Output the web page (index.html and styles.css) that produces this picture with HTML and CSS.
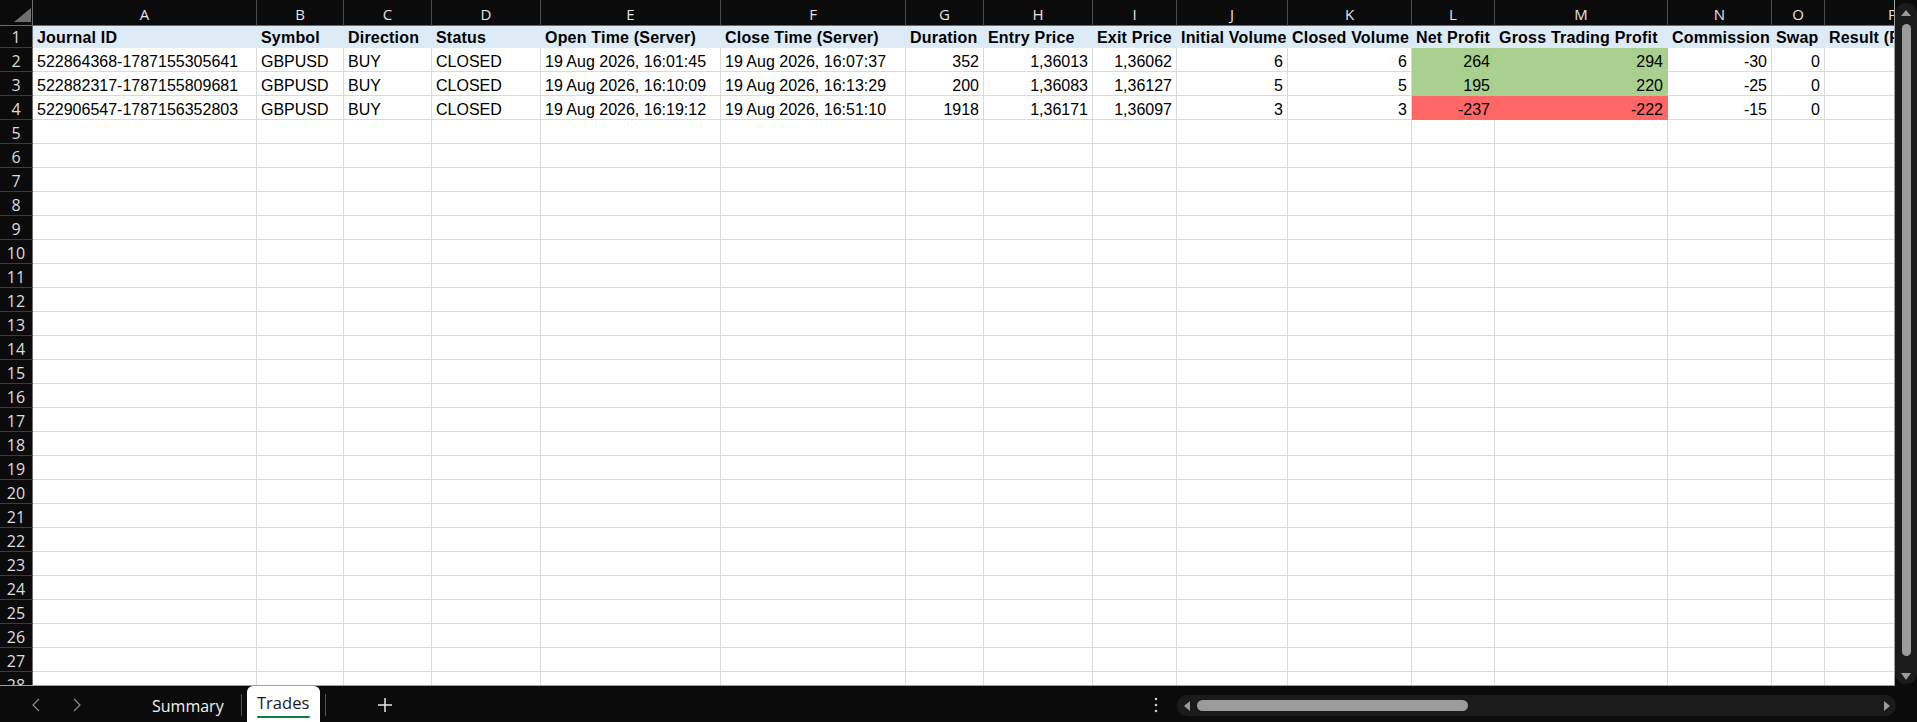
FILE: index.html
```html
<!DOCTYPE html>
<html lang="en">
<head>
    <meta charset="UTF-8">
    <meta name="viewport" content="width=device-width, initial-scale=1.0">
    <title>Trades</title>
    <link rel="stylesheet" href="styles.css">
</head>
<body>
    <div class="workbook">
        <div class="sheet-area">
            <div class="grid-wrap">
                <div class="grid" id="grid">
                    <div class="corner">
                        <svg width="17" height="14" viewBox="0 0 17 14"><polygon points="0,14 17,14 17,0" fill="#6f6f6f"/></svg>
                    </div>
                    <div class="col-head">A</div>
                    <div class="col-head">B</div>
                    <div class="col-head">C</div>
                    <div class="col-head">D</div>
                    <div class="col-head">E</div>
                    <div class="col-head">F</div>
                    <div class="col-head">G</div>
                    <div class="col-head">H</div>
                    <div class="col-head">I</div>
                    <div class="col-head">J</div>
                    <div class="col-head">K</div>
                    <div class="col-head">L</div>
                    <div class="col-head">M</div>
                    <div class="col-head">N</div>
                    <div class="col-head">O</div>
                    <div class="col-head">P</div>

                    <div class="row-head">1</div>
                    <div class="head">Journal ID</div>
                    <div class="head">Symbol</div>
                    <div class="head">Direction</div>
                    <div class="head">Status</div>
                    <div class="head">Open Time (Server)</div>
                    <div class="head">Close Time (Server)</div>
                    <div class="head">Duration</div>
                    <div class="head">Entry Price</div>
                    <div class="head">Exit Price</div>
                    <div class="head">Initial Volume</div>
                    <div class="head">Closed Volume</div>
                    <div class="head">Net Profit</div>
                    <div class="head">Gross Trading Profit</div>
                    <div class="head">Commission</div>
                    <div class="head">Swap</div>
                    <div class="head">Result (Pips)</div>

                    <div class="row-head">2</div>
                    <div>522864368-1787155305641</div>
                    <div>GBPUSD</div>
                    <div>BUY</div>
                    <div>CLOSED</div>
                    <div>19 Aug 2026, 16:01:45</div>
                    <div>19 Aug 2026, 16:07:37</div>
                    <div class="num">352</div>
                    <div class="num">1,36013</div>
                    <div class="num">1,36062</div>
                    <div class="num">6</div>
                    <div class="num">6</div>
                    <div class="num pos">264</div>
                    <div class="num pos">294</div>
                    <div class="num">-30</div>
                    <div class="num">0</div>
                    <div></div>

                    <div class="row-head">3</div>
                    <div>522882317-1787155809681</div>
                    <div>GBPUSD</div>
                    <div>BUY</div>
                    <div>CLOSED</div>
                    <div>19 Aug 2026, 16:10:09</div>
                    <div>19 Aug 2026, 16:13:29</div>
                    <div class="num">200</div>
                    <div class="num">1,36083</div>
                    <div class="num">1,36127</div>
                    <div class="num">5</div>
                    <div class="num">5</div>
                    <div class="num pos">195</div>
                    <div class="num pos">220</div>
                    <div class="num">-25</div>
                    <div class="num">0</div>
                    <div></div>

                    <div class="row-head">4</div>
                    <div>522906547-1787156352803</div>
                    <div>GBPUSD</div>
                    <div>BUY</div>
                    <div>CLOSED</div>
                    <div>19 Aug 2026, 16:19:12</div>
                    <div>19 Aug 2026, 16:51:10</div>
                    <div class="num">1918</div>
                    <div class="num">1,36171</div>
                    <div class="num">1,36097</div>
                    <div class="num">3</div>
                    <div class="num">3</div>
                    <div class="num neg">-237</div>
                    <div class="num neg">-222</div>
                    <div class="num">-15</div>
                    <div class="num">0</div>
                    <div></div>
                </div>
            </div>

            <div class="vscroll">
                <div class="vtrack">
                    <span class="tri tri-up"></span>
                    <div class="vthumb"></div>
                    <span class="tri tri-down"></span>
                </div>
            </div>
        </div>

        <div class="tabbar">
            <div class="tab-nav">
                <span class="nav-btn">
                    <svg width="10" height="14" viewBox="0 0 10 14"><polyline points="8,1 2,7 8,13" fill="none" stroke="#8c8c8c" stroke-width="1.2"/></svg>
                </span>
                <span class="nav-btn">
                    <svg width="10" height="14" viewBox="0 0 10 14"><polyline points="2,1 8,7 2,13" fill="none" stroke="#8c8c8c" stroke-width="1.2"/></svg>
                </span>
            </div>
            <div class="tab">Summary</div>
            <div class="tab-sep"></div>
            <div class="tab active">Trades</div>
            <div class="tab-sep sep-after"></div>
            <div class="tab-add">
                <svg width="16" height="16" viewBox="0 0 16 16"><path d="M8 1v14M1 8h14" stroke="#e6e6e6" stroke-width="1.5"/></svg>
            </div>
            <div class="spacer"></div>
            <div class="more">
                <svg width="4" height="16" viewBox="0 0 4 16"><circle cx="2" cy="2" r="1.3" fill="#c8c8c8"/><circle cx="2" cy="8" r="1.3" fill="#c8c8c8"/><circle cx="2" cy="14" r="1.3" fill="#c8c8c8"/></svg>
            </div>
            <div class="htrack">
                <span class="tri tri-left"></span>
                <div class="hthumb"></div>
                <div class="spacer"></div>
                <span class="tri tri-right"></span>
            </div>
        </div>
    </div>

    <script>
        // Linhas vazias da planilha (5 a 28)
        const grid = document.getElementById("grid");
        for (let r = 5; r <= 28; r++) {
            const head = document.createElement("div");
            head.className = "row-head";
            head.textContent = r;
            grid.appendChild(head);
            for (let c = 0; c < 16; c++) {
                grid.appendChild(document.createElement("div"));
            }
        }
    </script>
</body>
</html>
```

FILE: styles.css
```css
body {
    margin: 0;
    background-color: #0b0b0b;
    font-family: "Liberation Sans", Arial, sans-serif;
    overflow: hidden;
}

.workbook {
    width: 1917px;
    height: 722px;
    display: flex;
    flex-direction: column;
}

.sheet-area {
    display: flex;
    height: 686px;
}

.grid-wrap {
    width: 1895px;
    height: 686px;
    box-sizing: border-box;
    overflow: hidden;
    background-color: #fff;
    border-right: 1px solid #a0a0a0;
    border-bottom: 1px solid #a0a0a0;
}

.grid {
    display: grid;
    grid-template-columns: 33px 224px 87px 88px 109px 180px 185px 78px 109px 84px 111px 124px 83px 173px 104px 53px 136px;
    grid-template-rows: 26px 22px;
    grid-auto-rows: 24px;
    width: max-content;
}

.grid > div {
    box-sizing: border-box;
    display: flex;
    align-items: flex-end;
    padding: 0 4px;
    border-right: 1px solid #dadada;
    border-bottom: 1px solid #dadada;
    font-size: 16px;
    line-height: 18px;
    color: #000;
    white-space: nowrap;
    overflow: hidden;
}

.grid > .corner {
    background-color: #0b0b0b;
    justify-content: flex-end;
    padding: 0 1px 3px 0;
    border-right-color: #6b6b6b;
    border-bottom-color: #6b6b6b;
}

.corner svg {
    display: block;
}

.grid > .col-head {
    background-color: #0b0b0b;
    justify-content: center;
    align-items: center;
    padding-top: 2px;
    font-family: "Open Sans", sans-serif;
    font-size: 15px;
    color: #e4e4e4;
    border-right-color: #4a4a4a;
    border-bottom-color: #6b6b6b;
}

.grid > .row-head {
    background-color: #0b0b0b;
    justify-content: center;
    padding: 0 0 1px 0;
    font-family: "Open Sans", sans-serif;
    font-size: 16px;
    color: #dcdcdc;
    border-right-color: #6b6b6b;
    border-bottom-color: #3c3c3c;
}

.grid > .head {
    background-color: #ddebf7;
    border-color: #ddebf7;
    font-weight: bold;
    letter-spacing: 0.2px;
}

.grid > .num {
    justify-content: flex-end;
}

.grid > .pos {
    background-color: #a9d08e;
    border-color: #a9d08e;
}

.grid > .neg {
    background-color: #ff6666;
    border-color: #ff6666;
}

/* barra de rolagem vertical */
.vscroll {
    width: 22px;
    padding-top: 3px;
}

.vtrack {
    height: 681px;
    box-sizing: border-box;
    padding-top: 7px;
    border-radius: 11px;
    background-color: #1b1b1b;
    display: flex;
    flex-direction: column;
    align-items: center;
}

.vthumb {
    width: 9px;
    height: 632px;
    margin-top: 8px;
    border-radius: 5px;
    background-color: #9b9b9b;
}

.tri {
    width: 0;
    height: 0;
    display: block;
}

.tri-up {
    border-left: 5px solid transparent;
    border-right: 5px solid transparent;
    border-bottom: 6px solid #9b9b9b;
}

.tri-down {
    margin-top: 17px;
    border-left: 5px solid transparent;
    border-right: 5px solid transparent;
    border-top: 7px solid #9b9b9b;
}

.tri-left {
    border-top: 5px solid transparent;
    border-bottom: 5px solid transparent;
    border-right: 6px solid #9b9b9b;
}

.tri-right {
    border-top: 5px solid transparent;
    border-bottom: 5px solid transparent;
    border-left: 6px solid #9b9b9b;
}

/* abas */
.tabbar {
    height: 36px;
    display: flex;
    font-family: "Open Sans", sans-serif;
}

.tab-nav {
    width: 130px;
    box-sizing: border-box;
    display: flex;
    align-items: center;
    gap: 21px;
    padding-left: 26px;
}

.nav-btn {
    width: 20px;
    display: flex;
    justify-content: center;
    margin-top: 2px;
}

.tab {
    display: flex;
    align-items: center;
    padding: 3px 17px 0 22px;
    font-size: 16px;
    color: #f2f2f2;
}

.tab.active {
    width: 73px;
    box-sizing: border-box;
    justify-content: center;
    margin-left: 5px;
    padding: 0 0 4px 0;
    background-color: #fff;
    color: #1a1a1a;
    font-size: 16.5px;
    border-radius: 6px 6px 0 0;
    position: relative;
}

.tab.active::after {
    content: "";
    position: absolute;
    left: 10px;
    right: 10px;
    bottom: 4px;
    height: 2px;
    border-radius: 1px;
    background-color: #107c41;
}

.tab-sep {
    width: 1px;
    margin: 8px 0 6px;
    background-color: #555;
}

.sep-after {
    margin-left: 5px;
}

.tab-add {
    display: flex;
    align-items: center;
    margin-left: 51px;
    margin-top: 1px;
}

.spacer {
    flex: 1;
}

.more {
    display: flex;
    align-items: center;
    margin-right: 19px;
    margin-top: 2px;
}

.htrack {
    width: 719px;
    height: 21px;
    margin: 9px 21px 0 0;
    box-sizing: border-box;
    padding: 0 6px 0 7px;
    border-radius: 11px;
    background-color: #1b1b1b;
    display: flex;
    align-items: center;
}

.hthumb {
    width: 271px;
    height: 11px;
    margin-left: 7px;
    border-radius: 6px;
    background-color: #9b9b9b;
}
```
